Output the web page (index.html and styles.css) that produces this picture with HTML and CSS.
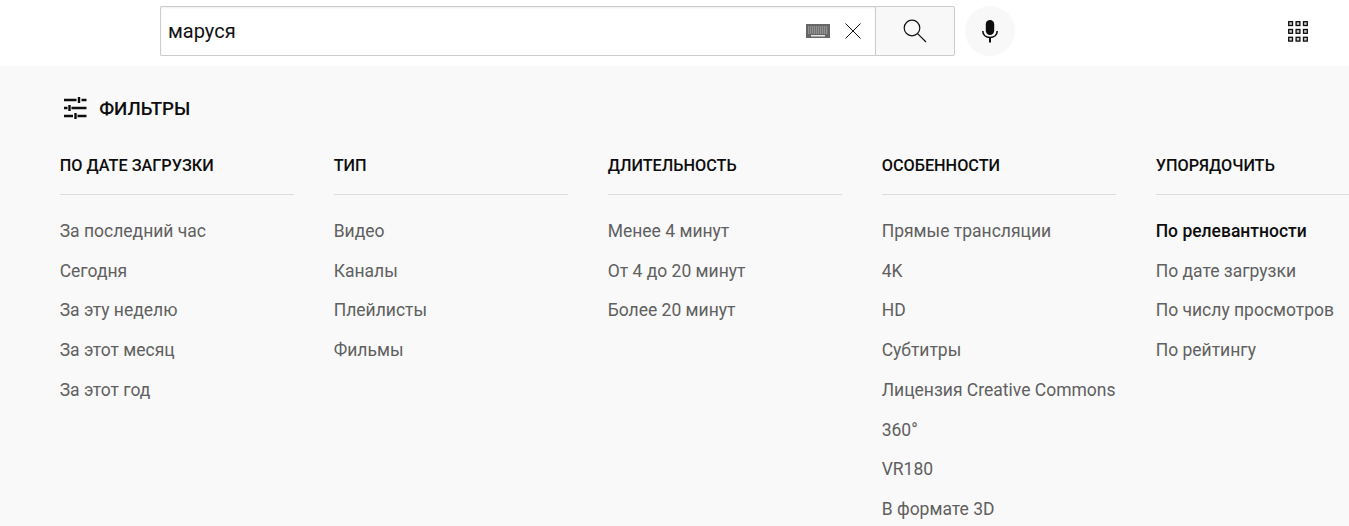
FILE: index.html
```html
<!DOCTYPE html>
<html lang="ru">
<head>
<meta charset="utf-8">
<title>маруся</title>
<link rel="stylesheet" href="styles.css">
</head>
<body>
<header class="top">
  <div class="search">
    <div class="box">
      <span class="query">маруся</span>
      <svg class="kbd" width="24" height="14" viewBox="0 0 24 14"><rect width="24" height="14" fill="#666"/><path d="M2 3h20M2 5h20M2 7h20M2 9h20" stroke="#bbb" stroke-width="1.200" stroke-dasharray="1.300 .7"/><rect x="5" y="11" width="14" height="1.500" fill="#e4e4e4"/></svg>
      <svg class="clear" width="16" height="16" viewBox="0 0 16 16"><path d="M.5.5l15 15M15.500.5l-15 15" stroke="#111" stroke-width="1" fill="none"/></svg>
    </div>
    <button class="go" type="button" aria-label="Поиск">
      <svg width="26" height="26" viewBox="0 0 26 26"><circle cx="10" cy="10" r="7.800" fill="none" stroke="#111" stroke-width="1.200"/><path d="M15.600 15.600l8.400 8.400" stroke="#111" stroke-width="1.200"/></svg>
    </button>
  </div>
  <button class="mic" type="button" aria-label="Голосовой поиск">
    <svg width="18" height="24" viewBox="0 0 18 24"><rect x="4.800" y="1" width="8.400" height="15" rx="4.200" fill="#0d0d0d"/><path d="M1.800 12c0 4 3.200 6.500 7.200 6.500s7.200-2.500 7.200-6.500" fill="none" stroke="#0d0d0d" stroke-width="1.600"/><rect x="8" y="18" width="2" height="5.500" fill="#0d0d0d"/></svg>
  </button>
  <svg class="apps" width="20" height="21" viewBox="0 0 20 21" aria-label="Приложения">
    <rect x=".7" y=".7" width="3.800" height="3.800"/><rect x="8.100" y=".7" width="3.800" height="3.800"/><rect x="15.500" y=".7" width="3.800" height="3.800"/>
    <rect x=".7" y="8.500" width="3.800" height="3.800"/><rect x="8.100" y="8.500" width="3.800" height="3.800"/><rect x="15.500" y="8.500" width="3.800" height="3.800"/>
    <rect x=".7" y="16.300" width="3.800" height="3.800"/><rect x="8.100" y="16.300" width="3.800" height="3.800"/><rect x="15.500" y="16.300" width="3.800" height="3.800"/>
  </svg>
</header>
<main class="panel">
  <div class="filters-head">
    <svg width="24" height="24" viewBox="0 0 24 24"><path d="M1 3h12.500M18.500 3h5M1 11h3.500M8.500 11h15M1 19h9M14.500 19h9M16 0v6M6.500 8v6M12.500 16v6" fill="none" stroke="#0d0d0d" stroke-width="2.400"/></svg>
    <span>ФИЛЬТРЫ</span>
  </div>
  <div class="cols">
    <section class="col">
      <h3>По дате загрузки</h3>
      <ul>
        <li>За последний час</li>
        <li>Сегодня</li>
        <li>За эту неделю</li>
        <li>За этот месяц</li>
        <li>За этот год</li>
      </ul>
    </section>
    <section class="col">
      <h3>Тип</h3>
      <ul>
        <li>Видео</li>
        <li>Каналы</li>
        <li>Плейлисты</li>
        <li>Фильмы</li>
      </ul>
    </section>
    <section class="col">
      <h3>Длительность</h3>
      <ul>
        <li>Менее 4 минут</li>
        <li>От 4 до 20 минут</li>
        <li>Более 20 минут</li>
      </ul>
    </section>
    <section class="col">
      <h3>Особенности</h3>
      <ul>
        <li>Прямые трансляции</li>
        <li>4K</li>
        <li>HD</li>
        <li>Субтитры</li>
        <li>Лицензия Creative Commons</li>
        <li>360°</li>
        <li>VR180</li>
        <li>В формате 3D</li>
      </ul>
    </section>
    <section class="col">
      <h3>Упорядочить</h3>
      <ul>
        <li class="active">По релевантности</li>
        <li>По дате загрузки</li>
        <li>По числу просмотров</li>
        <li>По рейтингу</li>
      </ul>
    </section>
  </div>
</main>
</body>
</html>
```
FILE: styles.css
```css
* { box-sizing: border-box; }
html, body { margin: 0; height: 526px; overflow: hidden; }
body { font-family: Roboto, "Noto Sans", sans-serif; background: #f9f9f9; color: #0d0d0d; }
.top { height: 66px; background: #fff; display: flex; align-items: center; padding: 0 41px 4px 160px; }
.search { display: flex; width: 795px; height: 50px; }
.box { flex: 1; display: flex; align-items: center; border: 1px solid #ccc; border-right: 0; border-radius: 2px 0 0 2px; padding-left: 7px; box-shadow: inset 0 1px 2px #eee; }
.query { flex: 1; font-size: 20px; color: #111; }
.kbd { margin-right: 15px; }
.clear { margin-right: 14px; }
.go { width: 80px; border: 1px solid #ccc; border-radius: 0 2px 2px 0; background: #f8f8f8; padding: 0; display: flex; align-items: center; justify-content: center; }
.mic { width: 50px; height: 50px; border: 0; border-radius: 50%; background: #f8f8f8; margin-left: 10px; padding: 0; display: flex; align-items: center; justify-content: center; }
.apps { margin-left: auto; }
.apps rect { fill: #ccc; stroke: #0d0d0d; stroke-width: 1.300; }
.panel { padding: 0 0 0 59.700px; }
.filters-head { display: flex; align-items: center; gap: 12.500px; height: 24px; margin-top: 31px; padding-left: 3px; font-size: 18.750px; font-weight: 500; }
.cols { display: flex; gap: 40px; margin-top: 25px; }
.col { width: 234px; flex: none; }
.col h3 { margin: 0; height: 49px; border-bottom: 1px solid #ddd; padding-top: 10px; font-size: 16.250px; line-height: 20px; font-weight: 500; text-transform: uppercase; color: #0d0d0d; }
.col ul { list-style: none; margin: 16.750px 0 0; padding: 0; }
.col li { height: 39.750px; line-height: 39.750px; font-size: 17.500px; color: #606060; white-space: nowrap; }
.col li.active { color: #0d0d0d; font-weight: 500; }
```
